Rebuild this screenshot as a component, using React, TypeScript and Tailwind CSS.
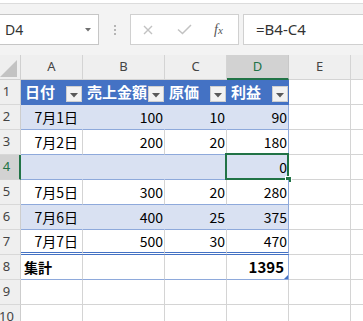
import React from "react";

const jp = "font-['Noto_Sans_CJK_JP','Noto_Sans',sans-serif]";
const ui = "font-['Noto_Sans','Liberation_Sans',sans-serif]";

const dataRows = [
  { n: 2, band: true, a: "7月1日", b: "100", c: "10", d: "90" },
  { n: 3, band: false, a: "7月2日", b: "200", c: "20", d: "180" },
  { n: 4, band: true, a: "", b: "", c: "", d: "0", sel: true },
  { n: 5, band: false, a: "7月5日", b: "300", c: "20", d: "280" },
  { n: 6, band: true, a: "7月6日", b: "400", c: "25", d: "375" },
  { n: 7, band: false, a: "7月7日", b: "500", c: "30", d: "470", last: true },
];

const headers = ["日付", "売上金額", "原価", "利益"];

function FilterButton() {
  return (
    <div className="absolute right-0 bottom-[2px] w-[16px] h-[16px] bg-[#f2f2f2] border border-[#cfcfcf] flex items-center justify-center">
      <svg width="8" height="5" viewBox="0 0 8 5" className="mt-[3px]">
        <polygon points="0,0 8,0 4,4.5" fill="#595959" />
      </svg>
    </div>
  );
}

function RowHead({ n, active }: { n: number | string; active?: boolean }) {
  return (
    <div
      className={
        active
          ? `bg-[#d2d2d2] text-[#217346] border-r-2 border-r-[#217346] border-b border-b-[#d4d4d4] flex items-center justify-center pr-[6px] text-[13px] ${ui}`
          : `bg-[#efefef] text-[#444] border-r border-r-[#cdcdcd] border-b border-b-[#d8d8d8] flex items-center justify-center pr-[7px] text-[13px] ${ui}`
      }
    >
      {n}
    </div>
  );
}

function EmptyCells() {
  return (
    <>
      <div className="bg-white border-r border-b border-[#d4d4d4]" />
      <div className="bg-white border-b border-[#d4d4d4]" />
    </>
  );
}

export default function App() {
  return (
    <div className="w-[363px] h-[321px] overflow-hidden bg-white relative select-none">
      {/* Formula bar */}
      <div className="h-[55px] bg-[#f3f3f3] border-t border-t-[#dcdcdc] mt-[3px] flex items-start pt-[10px]">
        <div className={`w-[99px] h-[31px] bg-white border border-l-0 border-[#c6c6c6] flex items-center pl-[5px] text-[14px] text-[#333] ${ui}`}>
          <span className="flex-1">D4</span>
          <svg width="6" height="4" viewBox="0 0 6 4" className="mr-[7px]">
            <polygon points="0,0 6,0 3,3.5" fill="#707070" />
          </svg>
        </div>
        <div className="w-[31px] h-[31px] flex flex-col items-center justify-center gap-[2px]">
          <div className="w-[2px] h-[2px] bg-[#b5b5b5]" />
          <div className="w-[2px] h-[2px] bg-[#b5b5b5]" />
          <div className="w-[2px] h-[2px] bg-[#b5b5b5]" />
        </div>
        <div className="w-[109px] h-[31px] bg-white border border-[#d0d0d0] flex items-center">
          <svg width="10" height="10" viewBox="0 0 10 10" className="ml-[12px]">
            <path d="M1 1 L9 9 M9 1 L1 9" stroke="#c2c2c2" strokeWidth="1.4" />
          </svg>
          <svg width="15" height="11" viewBox="0 0 15 11" className="ml-[24px]">
            <path d="M1 5.5 L5.5 9.5 L14 1" stroke="#c2c2c2" strokeWidth="1.5" fill="none" />
          </svg>
          <span className="ml-[22px] text-[14px] italic text-[#555] font-['Liberation_Serif',serif] leading-none">
            f<span className="text-[11px]">x</span>
          </span>
        </div>
        <div className={`ml-[4px] flex-1 h-[31px] bg-white border border-r-0 border-[#d0d0d0] flex items-center pl-[12px] text-[15px] text-[#333] ${ui}`}>
          =B4-C4
        </div>
      </div>

      {/* Sheet */}
      <div className="grid grid-cols-[21px_62px_82px_62px_62px_62px_1fr] auto-rows-[25px] -mt-[3px]">
        {/* Column headers */}
        <div className="bg-[#efefef] border-r border-b border-[#d0d0d0] relative">
          <svg width="18" height="18" viewBox="0 0 18 18" className="absolute right-[2px] bottom-[1px]">
            <polygon points="17,0 17,17 0,17" fill="#c3c3c3" />
          </svg>
        </div>
        {["A", "B", "C"].map((l) => (
          <div key={l} className={`bg-[#efefef] border-r border-b border-[#d4d4d4] flex items-center justify-center text-[13px] text-[#444] ${ui}`}>
            {l}
          </div>
        ))}
        <div className={`bg-[#d2d2d2] border-r border-r-[#c8c8c8] border-b-2 border-b-[#217346] flex items-center justify-center text-[13px] text-[#217346] ${ui}`}>
          D
        </div>
        <div className={`bg-[#efefef] border-r border-b border-[#d4d4d4] flex items-center justify-center text-[13px] text-[#444] ${ui}`}>
          E
        </div>
        <div className="bg-[#efefef] border-b border-[#d4d4d4]" />

        {/* Row 1: table header */}
        <RowHead n={1} />
        {headers.map((h, i) => (
          <div
            key={h}
            className={`relative bg-[#4472c4] border-b border-b-[#4472c4] border-r ${i === 3 ? "border-r-[#4472c4]" : "border-r-[#4472c4]"} flex items-center pl-[4px] text-white font-bold text-[15px] ${jp}`}
          >
            {h}
            <FilterButton />
          </div>
        ))}
        <EmptyCells />

        {/* Data rows */}
        {dataRows.map((r) => {
          const bg = r.band ? "bg-[#d9e1f2]" : "bg-white";
          const inner = r.band ? "border-r-[#d9e1f2]" : "border-r-[#d4d4d4]";
          const bottom = r.last
            ? "border-b-[3px] border-double border-b-[#4472c4]"
            : "border-b border-b-[#8ea9db]";
          const txt = `text-[14px] text-black ${jp}`;
          return (
            <React.Fragment key={r.n}>
              <RowHead n={r.n} active={r.sel} />
              <div className={`${bg} border-r ${inner} ${bottom} flex items-center justify-end pr-[4px] ${txt}`}>{r.a}</div>
              <div className={`${bg} border-r ${inner} ${bottom} flex items-center justify-end pr-[1px] ${txt}`}>{r.b}</div>
              <div className={`${bg} border-r ${inner} ${bottom} flex items-center justify-end pr-[1px] ${txt}`}>{r.c}</div>
              <div className={`relative ${bg} border-r border-r-[#8ea9db] ${bottom} flex items-center justify-end pr-[1px] ${txt}`}>
                {r.d}
                {r.sel && (
                  <div className="absolute -left-[2px] -top-[2px] w-[64px] h-[27px] border-2 border-[#217346]">
                    <div className="absolute left-[58px] top-[21px] w-[7px] h-[7px] bg-[#217346] border border-white" />
                  </div>
                )}
              </div>
              <EmptyCells />
            </React.Fragment>
          );
        })}

        {/* Row 8: totals */}
        <RowHead n={8} />
        <div className={`bg-white border-r border-r-[#d4d4d4] border-b border-b-[#8ea9db] flex items-center pl-[3px] font-bold text-[14px] text-black ${jp}`}>
          集計
        </div>
        <div className="bg-white border-r border-r-[#d4d4d4] border-b border-b-[#8ea9db]" />
        <div className="bg-white border-r border-r-[#d4d4d4] border-b border-b-[#8ea9db]" />
        <div className={`relative bg-white border-r border-r-[#8ea9db] border-b border-b-[#8ea9db] flex items-center justify-end pr-[4px] font-bold text-[15px] text-black ${jp}`}>
          1395
          <svg width="4" height="4" viewBox="0 0 4 4" className="absolute right-0 bottom-0">
            <polygon points="4,0 4,4 0,4" fill="#4472c4" />
          </svg>
        </div>
        <EmptyCells />

        {/* Rows 9-10 */}
        {[9, 10].map((n) => (
          <React.Fragment key={n}>
            <RowHead n={n} />
            <div className="bg-white border-r border-b border-[#d4d4d4]" />
            <div className="bg-white border-r border-b border-[#d4d4d4]" />
            <div className="bg-white border-r border-b border-[#d4d4d4]" />
            <div className="bg-white border-r border-b border-[#d4d4d4]" />
            <EmptyCells />
          </React.Fragment>
        ))}
      </div>
    </div>
  );
}
